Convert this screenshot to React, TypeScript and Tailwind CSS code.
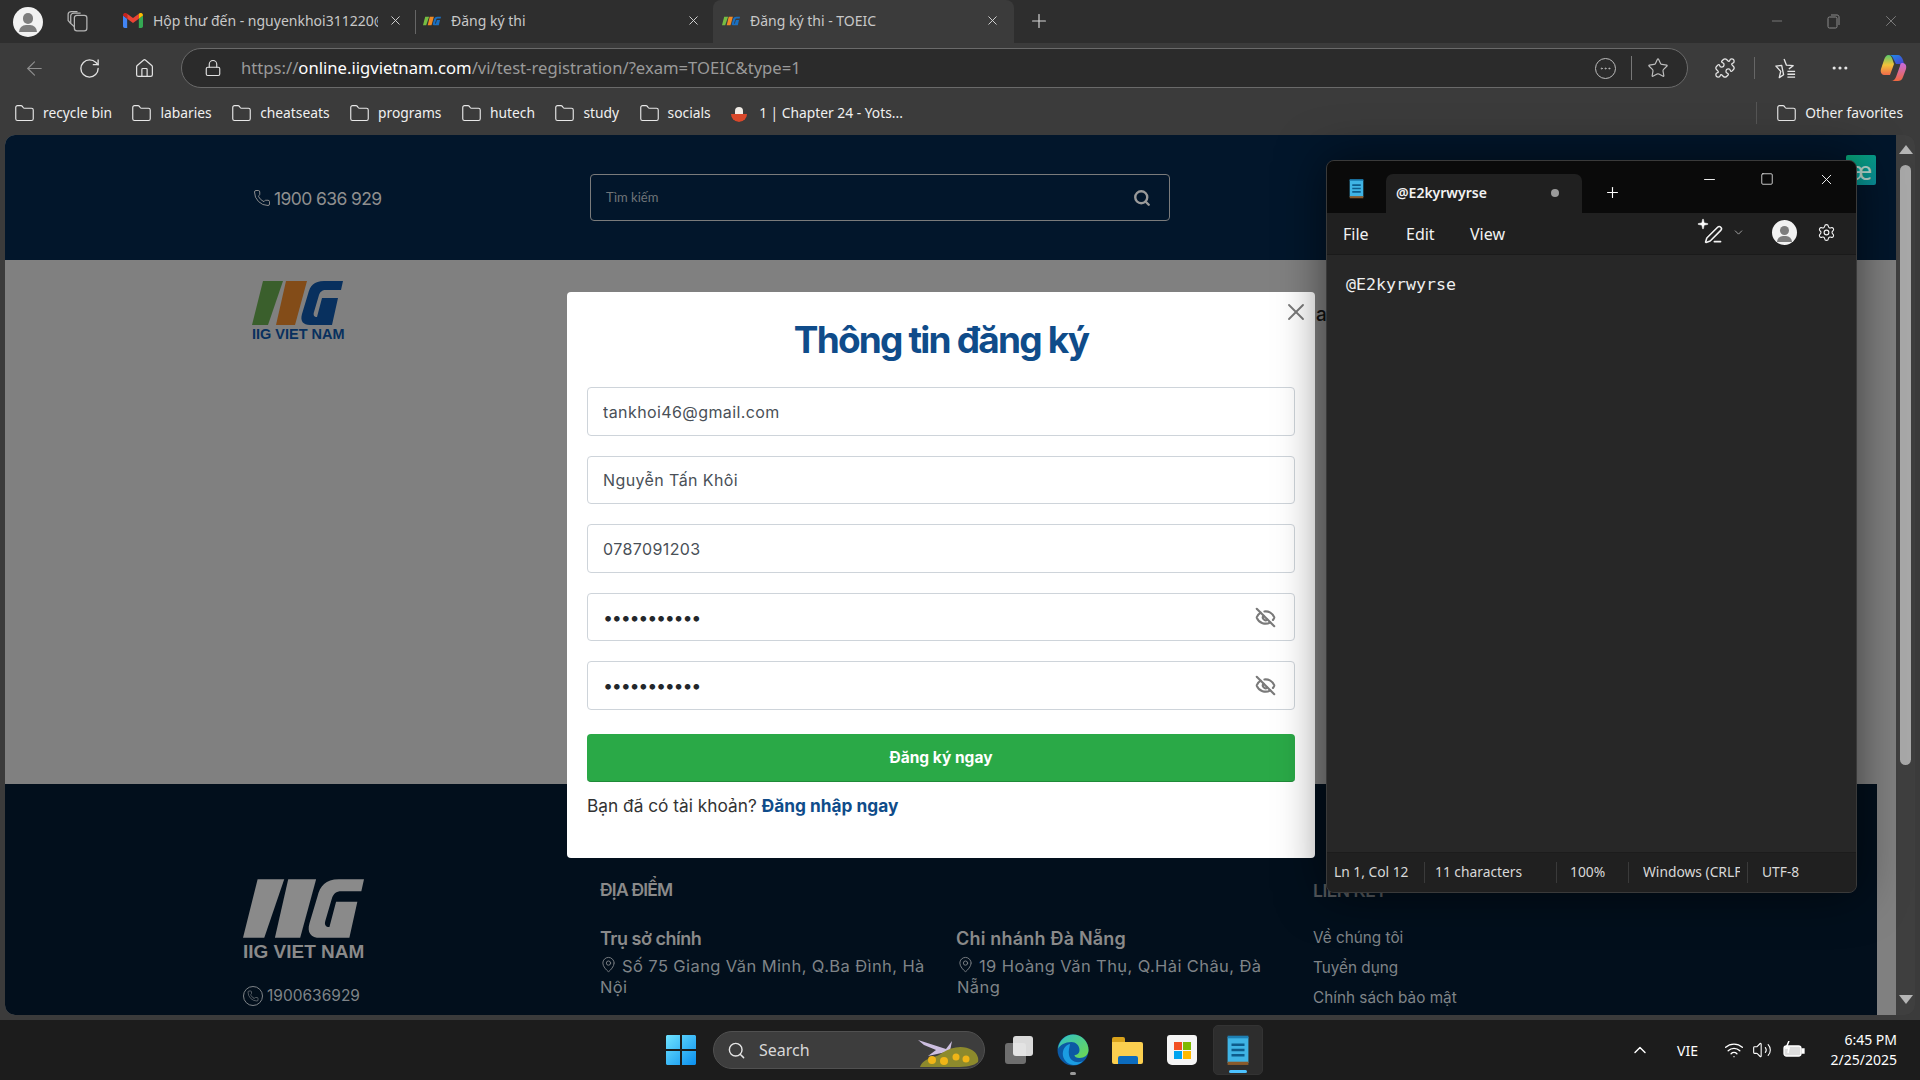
import { ArrowLeft, RotateCw, Home, Lock, Star, Puzzle, MoreHorizontal, Plus, X, Minus, Folder, EyeOff, Search, Phone, MapPin, ChevronUp, ChevronDown, Wifi, Volume2, Settings, Ellipsis, PenLine, Sparkle, Square } from 'lucide-react';

const BOOKMARKS = ['recycle bin', 'labaries', 'cheatseats', 'programs', 'hutech', 'study', 'socials'];

function IigMark({ bar1, bar2, g, className }: { bar1: string; bar2: string; g: string; className: string }) {
    return (
        <svg viewBox="0 0 91 44" className={className}>
            <polygon points="11,0 31,0 16,44 0,44" fill={bar1} />
            <polygon points="34,0 55,0 43,44 24,44" fill={bar2} />
            <path d="M91 0H72C62 0 58 5 56 13L50 33C48 40 51 44 58 44H80L86 17H70L65 36C62 36 61 34 62 31L67 14C68 11 70 9 74 9H89Z" fill={g} />
        </svg>
    );
}

function IigFavicon() {
    return (
        <svg viewBox="0 0 91 44" className="w-[18px] h-[14px] shrink-0">
            <polygon points="11,0 31,0 16,44 0,44" fill="#76bd43" />
            <polygon points="34,0 55,0 43,44 24,44" fill="#f08a24" />
            <path d="M91 0H72C62 0 58 5 56 13L50 33C48 40 51 44 58 44H80L86 17H70L65 36C62 36 61 34 62 31L67 14C68 11 70 9 74 9H89Z" fill="#1a6fc0" />
        </svg>
    );
}

function GmailIcon() {
    return (
        <svg viewBox="0 0 24 18" className="w-[20px] h-[15px] shrink-0">
            <path d="M0 3v13c0 1 1 2 2 2h3V7z" fill="#4285f4" />
            <path d="M24 3v13c0 1-1 2-2 2h-3V7z" fill="#34a853" />
            <path d="M5 7l7 5 7-5V1l-7 5-7-5z" fill="#ea4335" />
            <path d="M0 3c0-3 3-4 5-2v6L0 3z" fill="#c5221f" />
            <path d="M24 3c0-3-3-4-5-2v6l5-4z" fill="#fbbc04" />
        </svg>
    );
}

function Avatar({ size }: { size: string }) {
    return (
        <div className={`${size} rounded-full bg-[#f2f2f2] flex flex-col items-center justify-end overflow-hidden shrink-0`}>
            <div className="w-[36%] h-[36%] rounded-full bg-[#7d7d7d] mb-[4%]" />
            <div className="w-[62%] h-[24%] rounded-t-full rounded-b-md bg-[#7d7d7d] mb-[14%]" />
        </div>
    );
}

function Tab({ icon, title, active, className }: { icon: React.ReactNode; title: string; active?: boolean; className: string }) {
    return (
        <div className={`${className} h-full flex items-center pb-[2px] gap-[10px] ${active ? 'bg-[#3b3b3b] rounded-t-[8px]' : ''}`}>
            {icon}
            <span className="flex-1 overflow-hidden whitespace-nowrap text-[14px] text-[#c8c8c8]">{title}</span>
            <X className="w-[15px] h-[15px] text-[#d8d8d8] shrink-0" strokeWidth={1.5} />
        </div>
    );
}

function TabStrip() {
    return (
        <div className="h-[43px] bg-[#2e2e2e] flex items-end shrink-0">
            <div className="w-[56px] h-full flex items-center justify-center">
                <Avatar size="w-[30px] h-[30px]" />
            </div>
            <div className="w-[42px] h-full flex items-center justify-center">
                <svg viewBox="0 0 24 24" className="w-[25px] h-[25px] text-[#b5b5b5]" fill="none" stroke="currentColor" strokeWidth="1.2">
                    <rect x="9" y="6" width="12" height="15" rx="2.5" />
                    <path d="M9 17 5.500 14V6.500C5.500 5 7 4 8.500 4H15" />
                    <path d="M5.500 14 3 11V5c0-1.500 1.500-2.500 3-2.500h6" />
                </svg>
            </div>
            <div className="ml-[25px] w-[292px] h-full">
                <Tab className="w-full pr-[12px]" icon={<GmailIcon />} title="Hộp thư đến - nguyenkhoi311220@gmail.com" />
            </div>
            <div className="w-px h-[24px] bg-[#666] mb-[9px] mr-[7px]" />
            <Tab className="w-[290px] pr-[12px]" icon={<IigFavicon />} title="Đăng ký thi" />
            <Tab className="w-[301px] pl-[9px] pr-[14px]" active icon={<IigFavicon />} title="Đăng ký thi - TOEIC" />
            <div className="h-full w-[50px] flex items-center justify-center pb-[2px]">
                <Plus className="w-[22px] h-[22px] text-[#d5d5d5]" strokeWidth={1.3} />
            </div>
            <div className="ml-auto h-full flex items-center text-[#8a8a8a] pb-[2px]">
                <Minus className="w-[16px] h-[16px] mr-[40px]" strokeWidth={1.2} />
                <svg viewBox="0 0 16 16" className="w-[16px] h-[16px] mr-[41px]" fill="none" stroke="currentColor" strokeWidth="1">
                    <rect x="3" y="4" width="9" height="11" rx="1.5" />
                    <path d="M6 2h6c1.500 0 2 1 2 2v8" />
                </svg>
                <X className="w-[18px] h-[18px] mr-[20px]" strokeWidth={1.1} />
            </div>
        </div>
    );
}

function CopilotIcon() {
    return (
        <svg viewBox="0 0 28 28" className="w-[28px] h-[28px]">
            <defs>
                <linearGradient id="copA" x1="0" y1="0" x2="1" y2="1">
                    <stop offset="0" stopColor="#1b8fe8" />
                    <stop offset="1" stopColor="#4c3fd0" />
                </linearGradient>
                <linearGradient id="copB" x1="0" y1="0" x2="0" y2="1">
                    <stop offset="0" stopColor="#58c96a" />
                    <stop offset="0.5" stopColor="#f2c23a" />
                    <stop offset="1" stopColor="#ef6a4a" />
                </linearGradient>
                <linearGradient id="copC" x1="0" y1="0" x2="0" y2="1">
                    <stop offset="0" stopColor="#c56be0" />
                    <stop offset="1" stopColor="#f0683e" />
                </linearGradient>
            </defs>
            <path d="M9 1h9c2 0 4 2 5 5l1 4h-8L13 4C12 2 11 1 9 1z" fill="url(#copA)" />
            <path d="M9 1C6 1 5 3 4 6L1 15c-1 4 1 6 4 6h5l4-11-2-6C11 2 10 1 9 1z" fill="url(#copB)" />
            <path d="M22 9c3 0 5 2 4 6l-3 8c-1 3-3 4-5 4h-7c3 0 4-2 5-4l4-11c0-2 1-3 2-3z" fill="url(#copC)" />
        </svg>
    );
}

function FavoritesIcon() {
    return (
        <svg viewBox="0 0 24 24" className="w-[23px] h-[23px] ml-[19px]" fill="none" stroke="currentColor" strokeWidth="1.4">
            <path d="M10.500 2 13 8.500 20 9l-4.500 3.500M10 18.500 5.500 21.500 7 15 2 9.500l6-.8z" strokeLinejoin="round" />
            <path d="M14 15h8M14 18h8M14 21h8" />
        </svg>
    );
}

function Toolbar() {
    return (
        <div className="h-[47px] pt-[3px] bg-[#3b3b3b] flex items-center shrink-0">
            <div className="w-[181px] flex items-center text-[#e2e2e2]">
                <ArrowLeft className="w-[23px] h-[23px] ml-[23px] text-[#8e8e8e]" strokeWidth={1.2} />
                <RotateCw className="w-[23px] h-[23px] ml-[32px]" strokeWidth={1.4} />
                <Home className="w-[21px] h-[21px] ml-[33px]" strokeWidth={1.4} />
            </div>
            <div className="w-[1507px] h-[40px] rounded-full border border-[#6a6a6a] bg-[#2b2b2b] flex items-center">
                <Lock className="w-[18px] h-[18px] ml-[22px] text-[#e2e2e2]" strokeWidth={1.5} />
                <div className="ml-[19px] text-[16.650px] whitespace-nowrap text-[#9a9a9a]">
                    https://<span className="text-white">online.iigvietnam.com</span>/vi/test-registration/?exam=TOEIC&amp;type=1
                </div>
                <div className="ml-auto flex items-center mr-[18px] text-[#bdbdbd]">
                    <div className="w-[21px] h-[21px] rounded-full border border-[#bdbdbd] flex items-center justify-center">
                        <Ellipsis className="w-[13px] h-[13px]" strokeWidth={1.5} />
                    </div>
                    <div className="w-px h-[24px] bg-[#777] mx-[15px]" />
                    <Star className="w-[22px] h-[22px]" strokeWidth={1.3} />
                </div>
            </div>
            <div className="flex-1 flex items-center text-[#e5e5e5]">
                <Puzzle className="w-[22px] h-[22px] ml-[26px]" strokeWidth={1.4} />
                <div className="w-px h-[22px] bg-[#666] ml-[18px]" />
                <FavoritesIcon />
                <MoreHorizontal className="w-[20px] h-[20px] ml-[33px]" strokeWidth={1.8} />
                <div className="ml-[30px]"><CopilotIcon /></div>
            </div>
        </div>
    );
}

function BookmarkFolder({ label }: { label: string }) {
    return (
        <div className="flex items-center gap-[8px]">
            <Folder className="w-[21px] h-[21px] text-[#e8e8e8]" strokeWidth={1.3} />
            <span className="text-[13.800px] text-[#f0f0f0] whitespace-nowrap">{label}</span>
        </div>
    );
}

function BookmarksBar() {
    return (
        <div className="h-[45px] pt-[1px] bg-[#3b3b3b] flex items-center pl-[14px] pr-[17px] gap-[19.500px] shrink-0">
            {BOOKMARKS.map((b) => (
                <BookmarkFolder key={b} label={b} />
            ))}
            <div className="flex items-center gap-[11px]">
                <div className="w-[18px] h-[18px] rounded-full bg-[#3b3b3b] flex flex-col items-center justify-end overflow-hidden">
                    <div className="w-[8px] h-[7px] rounded-t-full bg-[#f0ece6]" />
                    <div className="w-[16px] h-[8px] rounded-b-full bg-[#d9482b]" />
                </div>
                <span className="text-[13.800px] text-[#f0f0f0] whitespace-nowrap">1 | Chapter 24 - Yots...</span>
            </div>
            <div className="ml-auto w-px h-[22px] bg-[#555]" />
            <BookmarkFolder label="Other favorites" />
        </div>
    );
}

function PageHeader() {
    return (
        <div className="h-[125px] bg-[#02162b] flex items-center shrink-0">
            <div className="ml-[248px] w-[337px] pt-[3px] flex items-center gap-[3px] text-[#8f8f8f]">
                <Phone className="w-[18px] h-[18px] -mt-[2px]" strokeWidth={1.3} />
                <span className="text-[17.500px] tracking-[-0.6px] font-['Inter',sans-serif]">1900 636 929</span>
            </div>
            <div className="w-[580px] h-[47px] border border-[#7b7b7b] rounded-[4px] flex items-center pl-[15px] pr-[18px]">
                <span className="text-[13px] text-[#6f7478]">Tìm kiếm</span>
                <Search className="ml-auto w-[18px] h-[18px] text-[#9a9a9a]" strokeWidth={3.2} />
            </div>
        </div>
    );
}

function PageFooter() {
    return (
        <div className="h-[231px] w-[1872px] bg-[#020f1c] flex overflow-hidden text-[#7f8488] shrink-0 font-['Inter',sans-serif]">
            <div className="ml-[238px] w-[357px] pt-[95px]">
                <IigMark bar1="#8a8a8a" bar2="#8a8a8a" g="#8a8a8a" className="w-[121px] h-[59px]" />
                <div className="text-[19px] leading-[24px] mt-[2px] font-bold text-[#8a8a8a] font-['Liberation_Sans',sans-serif]">IIG VIET NAM</div>
                <div className="mt-[20px] flex items-center gap-[4px] text-[15.500px]">
                    <div className="w-[20px] h-[20px] rounded-full border border-[#7f8488] flex items-center justify-center">
                        <Phone className="w-[12px] h-[12px]" strokeWidth={1.3} />
                    </div>
                    1900636929
                </div>
            </div>
            <div className="w-[713px] pt-[93px]">
                <div className="text-[17.500px] font-semibold tracking-[-0.8px] text-[#8a8a8a]">ĐỊA ĐIỂM</div>
                <div className="mt-[22px] flex">
                    <div className="w-[357px]">
                        <div className="text-[18px] font-semibold tracking-[-0.5px] text-[#8a8a8a]">Trụ sở chính</div>
                        <div className="w-[330px] text-[16.500px] leading-[21px] mt-[3px] tracking-[0.4px]">
                            <MapPin className="inline w-[17px] h-[19px] mr-[5px] align-[-2px]" strokeWidth={1.3} />
                            Số 75 Giang Văn Minh, Q.Ba Đình, Hà Nội
                        </div>
                    </div>
                    <div className="w-[330px]">
                        <div className="text-[18px] font-semibold tracking-[0.2px] text-[#8a8a8a] -ml-[1px]">Chi nhánh Đà Nẵng</div>
                        <div className="w-[320px] text-[16.500px] leading-[21px] mt-[3px] tracking-[0.4px]">
                            <MapPin className="inline w-[17px] h-[19px] mr-[5px] align-[-2px]" strokeWidth={1.3} />
                            19 Hoàng Văn Thụ, Q.Hải Châu, Đà Nẵng
                        </div>
                    </div>
                </div>
            </div>
            <div className="pt-[94px]">
                <div className="text-[17.500px] font-semibold tracking-[-0.5px] text-[#55595d]">LIÊN KẾT</div>
                <div className="mt-[22px] flex flex-col gap-[7px] text-[15.300px] leading-[23px]">
                    <span>Về chúng tôi</span>
                    <span>Tuyển dụng</span>
                    <span>Chính sách bảo mật</span>
                </div>
            </div>
        </div>
    );
}

function Scrollbar() {
    return (
        <div className="w-[19px] bg-[#3f3f3f] rounded-r-[10px] flex flex-col items-center pt-[10px] pb-[11px] shrink-0">
            <div className="w-0 h-0 border-l-[7px] border-r-[7px] border-b-[9px] border-l-transparent border-r-transparent border-b-[#b5b5b5]" />
            <div className="w-[11px] h-[600px] rounded-full bg-[#a8a8a8] mt-[11px]" />
            <div className="mt-auto w-0 h-0 border-l-[7px] border-r-[7px] border-t-[9px] border-l-transparent border-r-transparent border-t-[#b5b5b5]" />
        </div>
    );
}

function Field({ value, password }: { value: string; password?: boolean }) {
    return (
        <div className="h-[48.500px] rounded-[4px] border border-[#ced4da] bg-white flex items-center px-[15px] pt-[1px]">
            <input
                readOnly
                type={password ? 'password' : 'text'}
                value={value}
                className={`flex-1 outline-none bg-transparent ${password ? 'text-[18px] tracking-[-1.300px] text-[#23272b]' : 'text-[16px] tracking-[0.4px] text-[#495057]'}`}
            />
            {password && <EyeOff className="w-[21px] h-[21px] text-[#7a7a7a] mr-[3px]" strokeWidth={2.4} />}
        </div>
    );
}

function RegisterModal() {
    return (
        <div className="absolute left-[567px] top-[292px] w-[748px] h-[566px] bg-white rounded-[4px] px-[20px] font-['Inter',sans-serif]">
            <X className="absolute right-[5px] top-[6px] w-[28px] h-[28px] text-[#7a7a7a]" strokeWidth={1.6} />
            <h1 className="pt-[21px] h-[95px] text-center text-[37px] leading-[54px] font-bold tracking-[-1.800px] text-[#0f4c8a]">Thông tin đăng ký</h1>
            <div className="flex flex-col gap-[20px]">
                <Field value="tankhoi46@gmail.com" />
                <Field value="Nguyễn Tấn Khôi" />
                <Field value="0787091203" />
                <Field value="passwordabc" password />
                <Field value="passwordabc" password />
            </div>
            <button className="mt-[24px] w-full h-[48px] pt-[2px] rounded-[4px] bg-[#2aa947] border-b border-[#1f8a38] text-white text-[15.500px] font-bold">Đăng ký ngay</button>
            <div className="mt-[12px] text-[17.300px] leading-[24px] text-[#333]">
                Bạn đã có tài khoản? <span className="font-bold text-[#0f4c8a]">Đăng nhập ngay</span>
            </div>
        </div>
    );
}

function NotepadIcon({ size }: { size: string }) {
    return (
        <svg viewBox="0 0 20 24" className={size}>
            <rect x="2" y="2" width="16" height="20" fill="#3fb4e5" />
            <rect x="2" y="21" width="16" height="2.500" fill="#8a5a2b" />
            <rect x="2" y="1" width="16" height="2" fill="#1d7fb3" />
            <path d="M5 8h10M5 12h10M5 16h10" stroke="#0d5c8c" strokeWidth="2" />
        </svg>
    );
}

function NotepadWindow() {
    return (
        <div className="absolute left-[1326px] top-[160px] w-[531px] h-[733px] rounded-[8px] overflow-hidden bg-[#272727] border border-[#3a3a3a] flex flex-col shadow-[0_0_48px_rgba(0,0,0,0.55)]">
            <div className="h-[52px] bg-[#0a0a0a] flex items-end shrink-0">
                <div className="w-[59px] h-full flex items-center justify-center pt-[2px]">
                    <NotepadIcon size="w-[17px] h-[21px]" />
                </div>
                <div className="w-[196px] h-[39px] bg-[#202020] rounded-t-[7px] flex items-center pl-[10px] pr-[23px] pb-[2px]">
                    <span className="text-[14px] font-semibold text-[#f2f2f2]">@E2kyrwyrse</span>
                    <div className="ml-auto w-[8px] h-[8px] rounded-full bg-[#9a9a9a]" />
                </div>
                <div className="w-[60px] h-[39px] flex items-center justify-center pb-[2px]">
                    <Plus className="w-[17px] h-[17px] text-white" strokeWidth={1.6} />
                </div>
                <div className="ml-auto h-full flex items-start pt-[10px] text-white">
                    <Minus className="w-[17px] h-[17px] mr-[42px]" strokeWidth={1.3} />
                    <Square className="w-[14px] h-[14px] mr-[44px] mt-[1px]" strokeWidth={1.3} />
                    <X className="w-[17px] h-[17px] mr-[21px]" strokeWidth={1.3} />
                </div>
            </div>
            <div className="h-[41px] bg-[#202020] flex items-center pl-[16px] text-[16px] text-[#f2f2f2] shrink-0">
                <span className="w-[63px]">File</span>
                <span className="w-[64px]">Edit</span>
                <span>View</span>
                <div className="ml-auto flex items-center -mt-[2px]">
                    <div className="relative w-[26px] h-[26px] -mt-[3px]">
                        <PenLine className="absolute right-0 bottom-0 w-[19px] h-[19px]" strokeWidth={2} />
                        <Sparkle className="absolute left-0 top-0 w-[12px] h-[12px] fill-white" strokeWidth={1} />
                    </div>
                    <ChevronDown className="ml-[9px] w-[13px] h-[13px] text-[#bdbdbd]" strokeWidth={1.5} />
                    <div className="ml-[27px]"><Avatar size="w-[25px] h-[25px]" /></div>
                    <Settings className="ml-[20px] mr-[20px] w-[19px] h-[19px]" strokeWidth={1.4} />
                </div>
            </div>
            <div className="flex-1 border-t border-[#1a1a1a] pl-[19px] pt-[18px] text-[16.600px] leading-[24px] text-[#f0f0f0] font-['DejaVu_Sans_Mono',monospace]">
                @E2kyrwyrse
            </div>
            <div className="h-[40px] bg-[#202020] border-t border-[#1c1c1c] flex items-center text-[13.800px] text-[#d8d8d8] shrink-0">
                <span className="w-[97px] pl-[7px]">Ln 1, Col 12</span>
                <span className="w-[132px] pl-[10px] border-l border-[#3a3a3a]">11 characters</span>
                <span className="w-[72px] pl-[13px] border-l border-[#3a3a3a]">100%</span>
                <div className="w-[119px] pl-[14px] border-l border-[#3a3a3a]">
                    <div className="w-[97px] whitespace-nowrap overflow-hidden">Windows (CRLF)</div>
                </div>
                <span className="pl-[14px] border-l border-[#3a3a3a]">UTF-8</span>
            </div>
        </div>
    );
}

function WindowsLogo() {
    return (
        <svg viewBox="0 0 30 30" className="w-[30px] h-[30px]">
            <defs>
                <linearGradient id="winG" x1="0" y1="0" x2="1" y2="1">
                    <stop offset="0" stopColor="#6fe3ff" />
                    <stop offset="1" stopColor="#0a8fee" />
                </linearGradient>
            </defs>
            <path d="M0 1.500C0 .7.7 0 1.500 0h12.500v14H0zM16 0h12.500c.8 0 1.500.7 1.500 1.500V14H16zM0 16h14v14H1.500C.7 30 0 29.300 0 28.500zM16 16h14v12.500c0 .8-.7 1.500-1.500 1.500H16z" fill="url(#winG)" />
        </svg>
    );
}

function EdgeIcon() {
    return (
        <svg viewBox="0 0 32 32" className="w-[32px] h-[32px]">
            <defs>
                <linearGradient id="edgeA" x1="0" y1="0" x2="1" y2="1">
                    <stop offset="0" stopColor="#2fc1c9" />
                    <stop offset="1" stopColor="#6fd84e" />
                </linearGradient>
            </defs>
            <circle cx="16" cy="16" r="15.500" fill="#0c59a4" />
            <path d="M1 15C2 6 9 .5 16 .5 25 .5 31.500 8 31.500 16c0 5-4 8-9 8-3 0-5-1-5-3 2 0 5-1 5-5 0-5-4-8-8-8C8 8 3 11 1 15z" fill="url(#edgeA)" />
            <path d="M13 10c-5 1-8 6-7 12 1 5 6 9 11 9 4 0 7-2 9-4-6 3-13 0-14-6-.8-4 .5-8 1-11z" fill="#1b9de2" />
        </svg>
    );
}

function Taskbar() {
    return (
        <div className="h-[60px] bg-[#1c1c1c] flex items-center shrink-0 text-white">
            <div className="ml-[666px]"><WindowsLogo /></div>
            <div className="ml-[17px] w-[272px] h-[38px] rounded-full bg-[#3d3d3d] border border-[#505050] flex items-center overflow-hidden">
                <Search className="ml-[13px] w-[19px] h-[19px] text-[#e5e5e5]" strokeWidth={1.8} />
                <span className="ml-[13px] text-[16px] text-[#d8d8d8]">Search</span>
                <div className="ml-auto mr-[4px] relative w-[62px] h-[36px]">
                    <svg viewBox="0 0 62 36" className="w-full h-full">
                        <path d="M0 8 28 17l6-8-2 10 6 2-10-1-18 4 8-6-12-5z" fill="#cdbfe0" />
                        <path d="M2 35c4-10 14-8 22-14 10-7 22-8 30-3 5 3 7 8 6 12-4 4-12 5-22 5z" fill="#8d8a2c" />
                        <circle cx="14" cy="28" r="4" fill="#f0b517" />
                        <circle cx="26" cy="29" r="4" fill="#f0b517" />
                        <circle cx="38" cy="25" r="3.500" fill="#f0b517" />
                        <circle cx="48" cy="27" r="3.500" fill="#f0b517" />
                    </svg>
                </div>
            </div>
            <div className="ml-[20px] relative w-[30px] h-[30px]">
                <div className="absolute left-0 bottom-[1px] w-[21px] h-[21px] rounded-[3px] bg-[#6e6e6e]" />
                <div className="absolute right-[2px] top-[1px] w-[20px] h-[20px] rounded-[3px] bg-[#f0f0f0] opacity-90" />
            </div>
            <div className="ml-[22px] relative"><EdgeIcon /><div className="absolute left-[13px] -bottom-[9px] w-[6px] h-[3px] rounded-full bg-[#9a9a9a]" /></div>
            <div className="ml-[23px] w-[31px] h-[27px] flex flex-col">
                <div className="w-[13px] h-[5px] bg-[#d9a21b] rounded-t-[2px]" />
                <div className="flex-1 bg-[#fbcf4f] rounded-b-[2px] rounded-tr-[2px] flex items-end justify-center">
                    <div className="w-[20px] h-[8px] bg-[#0c6cbf] rounded-t-[2px]" />
                </div>
            </div>
            <div className="ml-[24px] w-[30px] h-[30px] bg-[#f5f5f5] rounded-b-[5px] rounded-t-[3px] grid grid-cols-2 gap-[1px] place-content-center justify-center">
                <div className="w-[8px] h-[8px] bg-[#f25022] justify-self-end" />
                <div className="w-[8px] h-[8px] bg-[#7fba00]" />
                <div className="w-[8px] h-[8px] bg-[#00a4ef] justify-self-end" />
                <div className="w-[8px] h-[8px] bg-[#ffb900]" />
            </div>
            <div className="ml-[16px] relative w-[50px] h-[50px] rounded-[5px] bg-[#2d2d2d] border border-[#333] flex items-center justify-center">
                <NotepadIcon size="w-[26px] h-[32px]" />
                <div className="absolute left-[15px] bottom-[1px] w-[18px] h-[3px] rounded-full bg-[#4cc2ff]" />
            </div>
            <div className="ml-auto flex items-center">
                <ChevronUp className="w-[20px] h-[20px]" strokeWidth={1.7} />
                <span className="ml-[27px] w-[34px] text-[14px]">VIE</span>
                <Wifi className="ml-[13px] w-[20px] h-[20px]" strokeWidth={1.6} />
                <Volume2 className="ml-[8px] w-[20px] h-[20px]" strokeWidth={1.3} />
                <svg viewBox="0 0 22 18" className="ml-[11px] w-[22px] h-[18px]" fill="none" stroke="white" strokeWidth="1.300">
                    <rect x="1" y="5" width="17" height="10" rx="2.500" fill="white" fillOpacity="0.85" />
                    <path d="M19 8h2v4h-2z" fill="white" />
                    <path d="M6 0 3 7h3l-1 5" stroke="white" strokeWidth="1.500" />
                </svg>
                <div className="ml-[22px] mr-[23px] text-right text-[14px] leading-[20px] w-[70px]">
                    <div>6:45 PM</div>
                    <div>2/25/2025</div>
                </div>
            </div>
        </div>
    );
}

export default function App() {
    return (
        <div className="relative w-[1920px] h-[1080px] overflow-hidden bg-[#3b3b3b] font-['Noto_Sans','Open_Sans',sans-serif]">
            <div className="flex flex-col h-full">
                <TabStrip />
                <Toolbar />
                <BookmarksBar />
                {/* page viewport */}
                <div className="h-[880px] mx-[5px] flex shrink-0 rounded-[10px] overflow-hidden font-['Lato',sans-serif]">
                    <div className="flex-1 flex flex-col bg-[#808080] min-w-0">
                        <PageHeader />
                        <div className="flex-1 flex items-start pl-[247px] pt-[21px]">
                            <div className="w-[93px]">
                                <IigMark bar1="#3a5f2c" bar2="#834c18" g="#08305e" className="w-[91px] h-[44px]" />
                                <div className="text-[14.500px] leading-[18px] font-bold text-[#08305e] whitespace-nowrap font-['Liberation_Sans',sans-serif]">IIG VIET NAM</div>
                            </div>
                            <span className="ml-[971px] mt-[20px] text-[19px] font-medium text-[#111] font-['Inter',sans-serif]">a</span>
                        </div>
                        <PageFooter />
                    </div>
                    <Scrollbar />
                </div>
                <div className="h-[5px] shrink-0" />
                <Taskbar />
            </div>
            {/* widget peeking from behind the notepad */}
            <div className="absolute left-[1846px] top-[155px] w-[30px] h-[30px] rounded-[2px] bg-gradient-to-br from-[#0aa877] to-[#0b8f9c] flex items-center justify-center text-[26px] leading-none text-[#b9d8d0]">æ</div>
            <RegisterModal />
            <NotepadWindow />
        </div>
    );
}
